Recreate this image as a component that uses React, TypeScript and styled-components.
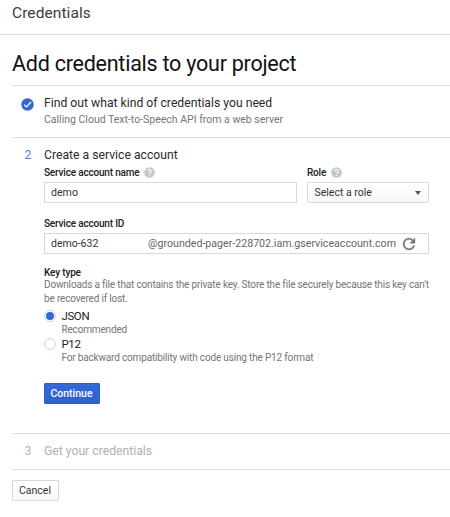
import React from "react";
import styled, { createGlobalStyle } from "styled-components";

const GlobalStyle = createGlobalStyle`
  * { box-sizing: border-box; }
  body { margin: 0; background: #fff; overflow: hidden; font-family: Roboto, "Liberation Sans", sans-serif; color: #212121; }
  button, input { font-family: inherit; margin: 0; }
`;

const Page = styled.div`
  width: 450px;
  height: 517px;
`;

const Header = styled.header`
  height: 35px;
  padding: 3px 12px 0;
  border-bottom: 1px solid #d9dbda;
  font-size: 15.5px;
  letter-spacing: 0.08px;
  line-height: 20px;
  color: #3c3c3c;
`;

const Main = styled.main`
  padding-left: 12px;
`;

const Title = styled.h1`
  margin: 0;
  height: 50px;
  padding-top: 14px;
  font-size: 21.5px;
  letter-spacing: -0.24px;
  font-weight: 400;
  line-height: 30px;
  color: #111;
  white-space: nowrap;
`;

const Step = styled.section<{ $height: number; $last?: boolean }>`
  display: grid;
  grid-template-columns: 32px 385px;
  align-content: start;
  height: ${(p) => p.$height}px;
  padding-top: 8px;
  border-top: 1px solid #dcdedd;
  border-bottom: ${(p) => (p.$last ? "1px solid #dcdedd" : "none")};
`;

const Marker = styled.div<{ $muted?: boolean }>`
  height: 18px;
  padding-left: 12.5px;
  font-size: 12.2px;
  line-height: 18px;
  color: ${(p) => (p.$muted ? "#b5b5b5" : "#5b80df")};
`;

const CheckIcon = styled.svg`
  display: block;
  width: 13px;
  height: 13px;
  margin: 4px 0 0 -3.5px;
`;

const StepTitle = styled.h2<{ $muted?: boolean }>`
  margin: 0;
  font-size: 12.2px;
  font-weight: 400;
  line-height: 18px;
  color: ${(p) => (p.$muted ? "#b0b0b0" : "#2b2b2b")};
  white-space: nowrap;
`;

const Note = styled.p<{ $large?: boolean }>`
  margin: 0;
  padding-top: ${(p) => (p.$large ? 1 : 0)}px;
  font-size: ${(p) => (p.$large ? 10.5 : 10)}px;
  letter-spacing: ${(p) => (p.$large ? 0 : -0.17)}px;
  line-height: 14px;
  color: #757575;
  white-space: nowrap;
`;

const FieldRow = styled.div`
  display: grid;
  grid-template-columns: 253px 122px;
  column-gap: 10px;
  margin-bottom: 12px;
`;

const Label = styled.div`
  display: flex;
  align-items: center;
  gap: 5px;
  height: 18px;
  padding-bottom: 2px;
  font-size: 10px;
  letter-spacing: -0.18px;
  font-weight: 500;
  color: #212121;
  white-space: nowrap;
`;

const HelpIcon = styled.svg`
  width: 11px;
  height: 11px;
`;

const Input = styled.input`
  display: block;
  width: 100%;
  height: 21px;
  padding: 0 6px;
  border: 1px solid #d8d8d8;
  border-radius: 0;
  outline: none;
  background: #fff;
  font-size: 10.6px;
  color: #333;
`;

const Select = styled.button`
  display: flex;
  align-items: center;
  justify-content: space-between;
  width: 100%;
  height: 21px;
  padding: 0 7px 0 6.5px;
  border: 1px solid #d8d8d8;
  border-radius: 1px;
  background: linear-gradient(#fff, #f8f8f8);
  font-size: 10.5px;
  color: #333;
`;

const Caret = styled.span`
  border: 3.5px solid transparent;
  border-top: 4px solid #555;
  border-bottom: 0;
`;

const IdBox = styled.div`
  display: grid;
  grid-template-columns: 103px 254px 1fr;
  align-items: center;
  height: 21px;
  border: 1px solid #d8d8d8;
`;

const IdInput = styled.input`
  width: 90px;
  height: 19px;
  padding: 0 6px;
  border: 0;
  outline: none;
  background: transparent;
  font-size: 10.5px;
  color: #333;
`;

const Domain = styled.span`
  font-size: 10.63px;
  line-height: 19px;
  color: #666;
  white-space: nowrap;
`;

const RefreshIcon = styled.svg`
  display: block;
  width: 18px;
  height: 18px;
  margin-left: -2.5px;
`;

const KeyType = styled.div`
  margin-top: 13px;
`;

const KeyLabel = styled.div`
  height: 11px;
  font-size: 10px;
  letter-spacing: -0.16px;
  font-weight: 500;
  line-height: 11px;
`;

const Options = styled.div`
  padding-top: 3px;
`;

const Option = styled.label`
  display: grid;
  grid-template-columns: 17.5px 1fr;
  height: 28px;
`;

const Radio = styled.span<{ $checked?: boolean }>`
  display: grid;
  place-items: center;
  width: 12px;
  height: 12px;
  margin-top: 1px;
  border: 1px solid #d4d4d4;
  border-radius: 50%;
  &::after {
    content: "";
    width: 8px;
    height: 8px;
    border-radius: 50%;
    background: ${(p) => (p.$checked ? "#3367d6" : "transparent")};
  }
`;

const OptionTitle = styled.div`
  font-size: 11.5px;
  letter-spacing: -0.4px;
  line-height: 14px;
  color: #212121;
`;

const Button = styled.button<{ $primary?: boolean }>`
  display: block;
  width: ${(p) => (p.$primary ? 56 : 47)}px;
  height: 21px;
  padding: 0 1px 0 0;
  border: 1px solid ${(p) => (p.$primary ? "#2a5bc9" : "#d8d8d8")};
  border-radius: 1px;
  background: ${(p) => (p.$primary ? "linear-gradient(#3569d8, #2d60cc)" : "linear-gradient(#fff, #fafafa)")};
  font-size: 10.5px;
  font-weight: ${(p) => (p.$primary ? 500 : 400)};
  line-height: 19px;
  color: ${(p) => (p.$primary ? "#fff" : "#333")};
`;

const Actions = styled.div<{ $gap: number }>`
  padding-top: ${(p) => p.$gap}px;
`;

const Help = () => (
  <HelpIcon viewBox="0 0 24 24">
    <circle cx="12" cy="12" r="11.5" fill="#c6c6c6" />
    <path d="M8.2 9.4a3.8 3.8 0 1 1 5.9 3.1c-1.4 1-2.1 1.4-2.1 3" fill="none" stroke="#fff" strokeWidth="2.3" />
    <circle cx="12" cy="18.6" r="1.5" fill="#fff" />
  </HelpIcon>
);

export default function App() {
  return (
    <>
      <GlobalStyle />
      <Page>
        <Header>Credentials</Header>
        <Main>
          <Title>Add credentials to your project</Title>
          <Step $height={52}>
            <Marker>
              <CheckIcon viewBox="0 0 24 24">
                <circle cx="12" cy="12" r="11.5" fill="#3367d6" />
                <path d="M6 12.5l4 4 8.5-9" fill="none" stroke="#fff" strokeWidth="2.4" />
              </CheckIcon>
            </Marker>
            <div>
              <StepTitle>Find out what kind of credentials you need</StepTitle>
              <Note $large>Calling Cloud Text-to-Speech API from a web server</Note>
            </div>
          </Step>
          <Step $height={296}>
            <Marker>2</Marker>
            <div>
              <StepTitle>Create a service account</StepTitle>
              <FieldRow>
                <div>
                  <Label>Service account name <Help /></Label>
                  <Input defaultValue="demo" />
                </div>
                <div>
                  <Label>Role <Help /></Label>
                  <Select type="button">Select a role <Caret /></Select>
                </div>
              </FieldRow>
              <Label>Service account ID</Label>
              <IdBox>
                <IdInput defaultValue="demo-632" />
                <Domain>@grounded-pager-228702.iam.gserviceaccount.com</Domain>
                <RefreshIcon viewBox="0 0 24 24">
                  <path d="M17.65 6.35A7.958 7.958 0 0 0 12 4a8 8 0 1 0 7.73 10h-2.08A6 6 0 1 1 12 6c1.66 0 3.14.69 4.22 1.78L13 11h7V4l-2.35 2.35z" fill="#757575" stroke="#757575" strokeWidth=".5" />
                </RefreshIcon>
              </IdBox>
              <KeyType>
                <KeyLabel>Key type</KeyLabel>
                <Note>
                  Downloads a file that contains the private key. Store the file securely because this key can't
                  <br />
                  be recovered if lost.
                </Note>
                <Options>
                  <Option>
                    <Radio $checked />
                    <div>
                      <OptionTitle>JSON</OptionTitle>
                      <Note>Recommended</Note>
                    </div>
                  </Option>
                  <Option>
                    <Radio />
                    <div>
                      <OptionTitle>P12</OptionTitle>
                      <Note>For backward compatibility with code using the P12 format</Note>
                    </div>
                  </Option>
                </Options>
              </KeyType>
              <Actions $gap={18}>
                <Button type="button" $primary>Continue</Button>
              </Actions>
            </div>
          </Step>
          <Step $height={37} $last>
            <Marker $muted>3</Marker>
            <StepTitle $muted>Get your credentials</StepTitle>
          </Step>
          <Actions $gap={10}>
            <Button type="button">Cancel</Button>
          </Actions>
        </Main>
      </Page>
    </>
  );
}
